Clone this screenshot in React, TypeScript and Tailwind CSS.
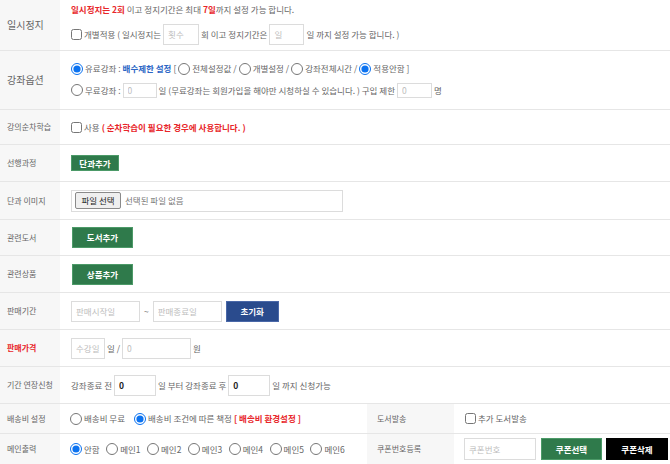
import type { ReactNode } from "react";

const red = "text-[#e8262a] font-bold";

function Label({ children, className = "" }: { children: ReactNode; className?: string }) {
  return (
    <div className={`flex w-[60px] shrink-0 items-center bg-[#f7f7f7] pl-[7px] text-[8px] text-[#666] ${className}`}>
      {children}
    </div>
  );
}

function Radio({ checked = false, label }: { checked?: boolean; label: ReactNode }) {
  return (
    <label className="flex items-center gap-[2px]">
      <input type="radio" defaultChecked={checked} className="m-0 h-[12px] w-[12px] accent-[#0b72f0]" />
      <span>{label}</span>
    </label>
  );
}

function Check({ label }: { label: ReactNode }) {
  return (
    <label className="flex items-center gap-[2px]">
      <input type="checkbox" className="m-0 h-[11px] w-[11px]" />
      <span>{label}</span>
    </label>
  );
}

function Field({ className, placeholder = "", value }: { className: string; placeholder?: string; value?: string }) {
  return (
    <input
      placeholder={placeholder}
      defaultValue={value}
      className={`border border-[#dcdcdc] bg-white px-[4px] text-[8.5px] text-[#222] outline-none placeholder:text-[#bdbdbd] ${className}`}
    />
  );
}

function Btn({ children, className }: { children: ReactNode; className: string }) {
  return (
    <button type="button" className={`flex items-center justify-center text-[8.5px] font-bold text-white ${className}`}>
      {children}
    </button>
  );
}

export default function App() {
  return (
    <div className="h-[464px] w-full overflow-hidden bg-white font-['Noto_Sans_CJK_KR','Noto_Sans',sans-serif] text-[8.5px] leading-none text-[#666]">
      {/* 일시정지 */}
      <div className="flex h-[51px] border-b border-[#e6e6e6]">
        <Label className="text-[10px]">일시정지</Label>
        <div className="flex flex-col justify-center gap-[10px] pl-[11px]">
          <p>
            <span className={red}>일시정지는 2회</span> 이고 정지기간은 최대 <span className={red}>7일</span>까지 설정 가능 합니다.
          </p>
          <div className="flex items-center">
            <Check label="개별적용 ( 일시정지는" />
            <Field className="ml-[2px] h-[21px] w-[36px]" placeholder="횟수" />
            <span className="ml-[2px]">회 이고 정지기간은</span>
            <Field className="ml-[2px] h-[21px] w-[35px]" placeholder="일" />
            <span className="ml-[2px]">일 까지 설정 가능 합니다. )</span>
          </div>
        </div>
      </div>

      {/* 강좌옵션 */}
      <div className="flex h-[59px] border-b border-[#e6e6e6]">
        <Label className="text-[10px]">강좌옵션</Label>
        <div className="flex flex-col justify-center gap-[8px] pl-[11px]">
          <div className="flex items-center gap-[2px]">
            <Radio checked label="유료강좌 :" />
            <span className="font-bold text-[#2b66c5]">배수제한 설정</span>
            <span>[</span>
            <Radio label="전체설정값 /" />
            <Radio label="개별설정 /" />
            <Radio label="강좌전체시간 /" />
            <Radio checked label="적용안함 ]" />
          </div>
          <div className="flex items-center gap-[2px]">
            <Radio label="무료강좌 :" />
            <Field className="h-[15px] w-[34px]" placeholder="0" />
            <span>일 (무료강좌는 회원가입을 해야만 시청하실 수 있습니다. ) 구입 제한</span>
            <Field className="h-[15px] w-[35px]" placeholder="0" />
            <span>명</span>
          </div>
        </div>
      </div>

      {/* 강의순차학습 */}
      <div className="flex h-[35px] border-b border-[#e6e6e6]">
        <Label>강의순차학습</Label>
        <div className="flex items-center gap-[2px] pl-[11px]">
          <Check label="사용" />
          <span className={red}>( 순차학습이 필요한 경우에 사용합니다. )</span>
        </div>
      </div>

      {/* 선행과정 */}
      <div className="flex h-[37px] border-b border-[#e6e6e6]">
        <Label>선행과정</Label>
        <div className="flex items-center pl-[11px]">
          <Btn className="h-[16px] w-[48px] border border-[#4c9a68] bg-[#2f7a4b] text-[7.5px]">단과추가</Btn>
        </div>
      </div>

      {/* 단과 이미지 */}
      <div className="flex h-[38px] border-b border-[#e6e6e6]">
        <Label>단과 이미지</Label>
        <div className="flex items-center pl-[11px]">
          <div className="flex h-[22px] w-[272px] items-center gap-[4px] border border-[#dcdcdc] px-[3px]">
            <span className="flex h-[17px] w-[46px] items-center justify-center rounded-[2px] border border-[#8a8a8a] bg-[#efefef] text-[8.5px] text-[#222]">
              파일 선택
            </span>
            <span className="text-[#777]">선택된 파일 없음</span>
          </div>
        </div>
      </div>

      {/* 관련도서 */}
      <div className="flex h-[36px] border-b border-[#e6e6e6]">
        <Label>관련도서</Label>
        <div className="flex items-center pl-[12px]">
          <Btn className="h-[21px] w-[61px] border border-[#4c9a68] bg-[#2f7a4b]">도서추가</Btn>
        </div>
      </div>

      {/* 관련상품 */}
      <div className="flex h-[37px] border-b border-[#e6e6e6]">
        <Label>관련상품</Label>
        <div className="flex items-center pl-[12px]">
          <Btn className="h-[21px] w-[61px] border border-[#4c9a68] bg-[#2f7a4b]">상품추가</Btn>
        </div>
      </div>

      {/* 판매기간 */}
      <div className="flex h-[37px] border-b border-[#e6e6e6]">
        <Label>판매기간</Label>
        <div className="flex items-center pl-[11px]">
          <Field className="h-[21px] w-[69px]" placeholder="판매시작일" />
          <span className="mx-[4px]">~</span>
          <Field className="h-[21px] w-[69px]" placeholder="판매종료일" />
          <Btn className="ml-[4px] h-[21px] w-[53px] border border-[#4a68a8] bg-[#2a4b8d]">초기화</Btn>
        </div>
      </div>

      {/* 판매가격 */}
      <div className="flex h-[37px] border-b border-[#e6e6e6]">
        <Label className="font-bold text-[#e8262a]">판매가격</Label>
        <div className="flex items-center pl-[11px]">
          <Field className="h-[21px] w-[34px]" placeholder="수강일" />
          <span className="mx-[2px]">일 /</span>
          <Field className="h-[21px] w-[69px]" placeholder="0" />
          <span className="ml-[2px]">원</span>
        </div>
      </div>

      {/* 기간 연장신청 */}
      <div className="flex h-[37px] border-b border-[#e6e6e6]">
        <Label>기간 연장신청</Label>
        <div className="flex items-center pl-[11px]">
          <span>강좌종료 전</span>
          <Field className="ml-[2px] h-[21px] w-[42px] font-bold" value="0" />
          <span className="ml-[2px]">일 부터 강좌종료 후</span>
          <Field className="ml-[2px] h-[21px] w-[42px] font-bold" value="0" />
          <span className="ml-[2px]">일 까지 신청가능</span>
        </div>
      </div>

      {/* 배송비 설정 / 도서발송 */}
      <div className="flex h-[30px] border-b border-[#e6e6e6]">
        <Label>배송비 설정</Label>
        <div className="flex w-[307px] items-center gap-[9px] pl-[10px]">
          <Radio label="배송비 무료" />
          <div className="flex items-center gap-[2px]">
            <Radio checked label="배송비 조건에 따른 책정" />
            <span className={red}>[ 배송비 환경설정 ]</span>
          </div>
        </div>
        <div className="flex w-[87px] items-center bg-[#f7f7f7] pl-[10px] text-[8px]">도서발송</div>
        <div className="flex items-center pl-[11px]">
          <Check label="추가 도서발송" />
        </div>
      </div>

      {/* 메인출력 / 쿠폰번호등록 */}
      <div className="flex h-[30px]">
        <Label>메인출력</Label>
        <div className="flex w-[307px] items-center gap-[6.5px] pl-[10px]">
          <Radio checked label="안함" />
          <Radio label="메인1" />
          <Radio label="메인2" />
          <Radio label="메인3" />
          <Radio label="메인4" />
          <Radio label="메인5" />
          <Radio label="메인6" />
        </div>
        <div className="flex w-[87px] items-center bg-[#f7f7f7] pl-[10px] text-[8px]">쿠폰번호등록</div>
        <div className="flex items-center pl-[10px]">
          <Field className="h-[22px] w-[72px]" placeholder="쿠폰번호" />
          <Btn className="ml-[5px] h-[22px] w-[61px] border border-[#4c9a68] bg-[#2f7a4b]">쿠폰선택</Btn>
          <Btn className="ml-[4px] h-[22px] w-[62px] bg-black">쿠폰삭제</Btn>
        </div>
      </div>
    </div>
  );
}
